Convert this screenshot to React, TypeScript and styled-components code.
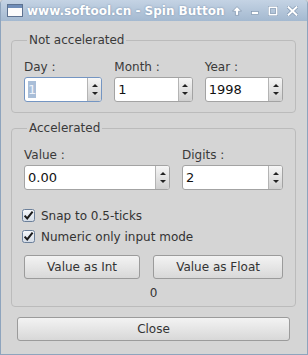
import styled, { createGlobalStyle } from "styled-components";

const GlobalStyle = createGlobalStyle`
  html, body {
    margin: 0;
    padding: 0;
  }
  body {
    background: #d5d5d5;
    color: #333;
    font-family: "DejaVu Sans", "Noto Sans", sans-serif;
    font-size: 12px;
  }
`;

const WindowIcon = () => (
  <IconSvg width="16" height="13" viewBox="0 0 16 13">
    <rect x="0.5" y="0.5" width="15" height="12" fill="#fbfbfb" stroke="#5d7290" />
    <rect x="1" y="1" width="14" height="3" fill="#6f8db8" />
  </IconSvg>
);

const ShadeIcon = () => (
  <IconSvg width="10" height="10" viewBox="0 0 10 10">
    <path d="M5 0.6 L9.5 5.2 L6.6 5.2 L6.6 9.4 L3.4 9.4 L3.4 5.2 L0.5 5.2 Z" fill="#fff" stroke="#8197b0" strokeWidth="0.8" />
  </IconSvg>
);

const MinIcon = () => (
  <IconSvg width="8" height="10" viewBox="0 0 8 10">
    <rect x="0.5" y="5.5" width="7" height="3" fill="#fff" stroke="#8197b0" strokeWidth="0.7" />
  </IconSvg>
);

const MaxIcon = () => (
  <IconSvg width="10" height="10" viewBox="0 0 10 10">
    <rect x="1.3" y="1.3" width="7.4" height="7.4" fill="none" stroke="#8197b0" strokeWidth="2.8" />
    <rect x="1.3" y="1.3" width="7.4" height="7.4" fill="none" stroke="#fff" strokeWidth="1.6" />
  </IconSvg>
);

const CloseIcon = () => (
  <IconSvg width="11" height="10" viewBox="0 0 11 10">
    <path d="M1.6 1.3 L9.4 8.7 M9.4 1.3 L1.6 8.7" stroke="#8197b0" strokeWidth="3.4" strokeLinecap="square" />
    <path d="M1.6 1.3 L9.4 8.7 M9.4 1.3 L1.6 8.7" stroke="#fff" strokeWidth="2.1" strokeLinecap="square" />
  </IconSvg>
);

const CheckMark = () => (
  <IconSvg width="13" height="13" viewBox="0 0 13 13">
    <defs>
      <linearGradient id="cb" x1="0" y1="0" x2="0" y2="1">
        <stop offset="0" stopColor="#f6f8fb" />
        <stop offset="1" stopColor="#d3dbe6" />
      </linearGradient>
    </defs>
    <rect x="0.5" y="0.5" width="12" height="12" rx="2" fill="url(#cb)" stroke="#6b7f99" />
    <path d="M2.6 6.6 L5.2 9.4 L10.6 2.6" fill="none" stroke="#1c1c1c" strokeWidth="2" />
  </IconSvg>
);

const Spin = ({ value, focused, selected }: { value: string; focused?: boolean; selected?: boolean }) => (
  <SpinBox $focused={focused}>
    <SpinField>{selected ? <Selection>{value}</Selection> : value}</SpinField>
    <SpinButtons>
      <Arrow $down={false} />
      <Arrow $down />
    </SpinButtons>
  </SpinBox>
);

export default function App() {
  return (
    <>
      <GlobalStyle />
      <Window>
        <TitleBar>
          <WindowIcon />
          <Title>www.softool.cn - Spin Button</Title>
          <TitleButtons>
            <ShadeIcon />
            <MinIcon />
            <MaxIcon />
            <CloseIcon />
          </TitleButtons>
        </TitleBar>
        <Body>
          <Frame $bottom={10}>
            <Legend>Not accelerated</Legend>
            <ThreeColumns>
              <Field>
                <Label>Day :</Label>
                <Spin value="1" focused selected />
              </Field>
              <Field>
                <Label>Month :</Label>
                <Spin value="1" />
              </Field>
              <Field>
                <Label>Year :</Label>
                <Spin value="1998" />
              </Field>
            </ThreeColumns>
          </Frame>
          <Frame $gap $bottom={5}>
            <Legend>Accelerated</Legend>
            <TwoColumns>
              <Field>
                <Label>Value :</Label>
                <Spin value="0.00" />
              </Field>
              <Field>
                <Label>Digits :</Label>
                <Spin value="2" />
              </Field>
            </TwoColumns>
            <Checks>
              <CheckRow>
                <CheckMark />
                Snap to 0.5-ticks
              </CheckRow>
              <CheckRow>
                <CheckMark />
                Numeric only input mode
              </CheckRow>
            </Checks>
            <ButtonRow>
              <PushButton>Value as Int</PushButton>
              <PushButton>Value as Float</PushButton>
            </ButtonRow>
            <Result>0</Result>
          </Frame>
          <CloseButton>Close</CloseButton>
        </Body>
      </Window>
    </>
  );
}

const IconSvg = styled.svg`
  display: block;
  flex-shrink: 0;
`;

const Window = styled.div`
  background: #d5d5d5;
  border: 1px solid #8ea4bd;
  border-radius: 4px 4px 0 0;
  border-top: none;
  box-sizing: border-box;
  display: flex;
  flex-direction: column;
  height: 355px;
  overflow: hidden;
  width: 308px;
`;

const TitleBar = styled.div`
  align-items: center;
  background: linear-gradient(#c4d3e4, #a4b9d0);
  display: flex;
  flex-shrink: 0;
  gap: 4px;
  height: 21px;
  margin: 0 -1px;
  padding: 0 10px 0 7px;
`;

const Title = styled.div`
  color: #fff;
  flex: 1;
  font-size: 12px;
  font-weight: bold;
  min-width: 0;
  text-shadow: 0 0 2px #7289a6;
  white-space: nowrap;
`;

const TitleButtons = styled.div`
  align-items: center;
  display: flex;
  gap: 9px;
`;

const Body = styled.div`
  display: flex;
  flex: 1;
  flex-direction: column;
  padding: 12px 11px 0 10px;
`;

const Frame = styled.fieldset<{ $gap?: boolean; $bottom: number }>`
  border: 1px solid #bbbbbb;
  border-radius: 4px;
  margin: ${(p) => (p.$gap ? "8px" : "0")} 0 0;
  min-width: 0;
  padding: 12px 12px ${(p) => p.$bottom}px;
`;

const Legend = styled.legend`
  color: #3a3a3a;
  line-height: 15px;
  margin-left: 3px;
  padding: 0 2px;
`;

const ThreeColumns = styled.div`
  column-gap: 12px;
  display: grid;
  grid-template-columns: repeat(3, 1fr);
`;

const TwoColumns = styled.div`
  column-gap: 12px;
  display: grid;
  grid-template-columns: 146px 1fr;
`;

const Field = styled.div`
  display: flex;
  flex-direction: column;
  gap: 2px;
`;

const Label = styled.div`
  color: #3a3a3a;
  line-height: 15px;
`;

const SpinBox = styled.div<{ $focused?: boolean }>`
  background: #fff;
  border: 1px solid ${(p) => (p.$focused ? "#7495c2" : "#a3a3a3")};
  border-radius: 3px;
  box-sizing: border-box;
  display: flex;
  height: 25px;
  overflow: hidden;
`;

const SpinField = styled.div`
  align-items: center;
  color: #111;
  display: flex;
  flex: 1;
  font-size: 13px;
  padding-left: 3px;
`;

const Selection = styled.span`
  background: #a9bed8;
  color: #eef3fa;
  line-height: 17px;
`;

const SpinButtons = styled.div`
  align-items: center;
  background: linear-gradient(#f6f6f6, #cfcfcf);
  border-left: 1px solid #b4b4b4;
  display: flex;
  flex-direction: column;
  gap: 5px;
  justify-content: center;
  width: 13px;
`;

const Arrow = styled.div<{ $down?: boolean }>`
  border-left: 3px solid transparent;
  border-right: 3px solid transparent;
  ${(p) => (p.$down ? "border-top: 3px solid #222;" : "border-bottom: 3px solid #222;")}
  height: 0;
  width: 0;
`;

const Checks = styled.div`
  display: flex;
  flex-direction: column;
  margin: 15px 0 0 -2px;
`;

const CheckRow = styled.div`
  align-items: center;
  color: #333;
  display: flex;
  gap: 6px;
  height: 21px;
`;

const ButtonRow = styled.div`
  display: flex;
  gap: 13px;
  margin-top: 8px;
`;

const PushButton = styled.button`
  background: linear-gradient(#f3f3f3, #d8d8d8);
  border: 1px solid #9b9b9b;
  border-radius: 3px;
  color: #333;
  flex: 1 1 auto;
  font-family: "DejaVu Sans", sans-serif;
  font-size: 12px;
  height: 24px;
  padding: 0 18px;
`;

const Result = styled.div`
  color: #333;
  line-height: 15px;
  margin-top: 7px;
  text-align: center;
`;

const CloseButton = styled(PushButton)`
  flex: none;
  margin: 10px 6px 0 6px;
`;
